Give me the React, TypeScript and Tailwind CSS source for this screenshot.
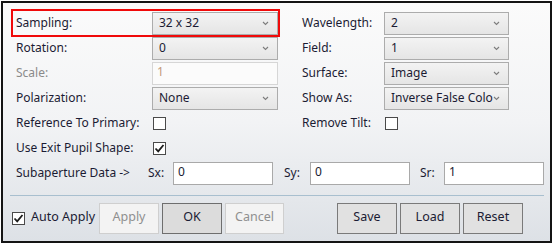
import React from 'react'

const font = { fontFamily: '"Noto Sans", "Liberation Sans", sans-serif' }

function Chevron() {
  return (
    <svg width="7" height="5" viewBox="0 0 7 5" className="shrink-0">
      <polyline points="1,1 3.5,3.5 6,1" fill="none" stroke="#7d7d7d" strokeWidth="1.1" />
    </svg>
  )
}

function Select({ value, width }: { value: string; width: string }) {
  return (
    <div
      className={`${width} h-[23px] flex items-center justify-between pl-[6px] pr-[8px] border border-[#acacac] bg-gradient-to-b from-[#f3f3f3] to-[#e5e5e5] text-[#1b1b33]`}
    >
      <span className="whitespace-nowrap overflow-hidden leading-[18px] -mt-[2px] pr-[2px]">{value}</span>
      <Chevron />
    </div>
  )
}

function Input({ value, width, disabled }: { value: string; width: string; disabled?: boolean }) {
  return (
    <div
      className={`${width} h-[23px] pl-[4px] leading-[17px] border ${
        disabled ? 'border-[#d6d6d6] bg-[#fbfbfb] text-[#c49a7c]' : 'border-[#a9a9a9] bg-white text-[#1b1b33]'
      }`}
    >
      {value}
    </div>
  )
}

function Check({ checked }: { checked?: boolean }) {
  return (
    <div className="w-[13px] h-[13px] border border-[#4a4a4a] bg-white flex items-center justify-center shrink-0">
      {checked && (
        <svg width="11" height="11" viewBox="0 0 11 11">
          <polyline points="1.5,5.5 4.2,8.3 9.5,2" fill="none" stroke="#1c1c1c" strokeWidth="1.8" />
        </svg>
      )}
    </div>
  )
}

function Button({ label, kind }: { label: string; kind: 'disabled' | 'default' | 'normal' }) {
  const cls =
    kind === 'disabled'
      ? 'border-[#cfcfcf] bg-[#f3f3f3] text-[#8f8f8f]'
      : kind === 'default'
      ? 'border-[#6e6e6e] bg-[#dcdcdc] text-[#1b1b33]'
      : 'border-[#7a7a7a] bg-[#e1e1e1] text-[#1b1b33]'
  return (
    <div
      className={`h-[31px] flex items-center justify-center border ${cls} pb-[2px] text-[12.5px]`}
      style={{ width: label === 'Cancel' ? 59 : 60 }}
    >
      {label}
    </div>
  )
}

function Row({ children }: { children: React.ReactNode }) {
  return <div className="relative flex items-center h-[23px]">{children}</div>
}

export default function App() {
  return (
    <div className="w-[553px] h-[244px] bg-white p-[1px] text-[12px]" style={font}>
      <div className="h-[242px] border-2 border-[#141414] bg-gradient-to-b from-[#fbfbfb] via-[#f2f3f5] to-[#dde1e6] flex flex-col">
        <div className="pt-[9px] pl-[13px] flex flex-col gap-[2px] text-[#1b1b33]">
          <Row>
            <div className="absolute -left-[5px] -top-[3px] w-[269px] h-[28px] border-2 border-[#f00a0a]" />
            <span className="w-[136px] -mt-[2px]">Sampling:</span>
            <Select value="32 x 32" width="w-[126px]" />
            <span className="ml-[24px] w-[82px] -mt-[2px]">Wavelength:</span>
            <Select value="2" width="w-[125px]" />
          </Row>
          <Row>
            <span className="w-[136px] -mt-[2px]">Rotation:</span>
            <Select value="0" width="w-[126px]" />
            <span className="ml-[24px] w-[82px] -mt-[2px]">Field:</span>
            <Select value="1" width="w-[125px]" />
          </Row>
          <Row>
            <span className="w-[136px] -mt-[2px] text-[#8a8a8a]">Scale:</span>
            <Input value="1" width="w-[126px]" disabled />
            <span className="ml-[24px] w-[82px] -mt-[2px]">Surface:</span>
            <Select value="Image" width="w-[125px]" />
          </Row>
          <Row>
            <span className="w-[136px] -mt-[2px]">Polarization:</span>
            <Select value="None" width="w-[126px]" />
            <span className="ml-[24px] w-[82px] -mt-[2px]">Show As:</span>
            <Select value="Inverse False Colo" width="w-[125px]" />
          </Row>
          <Row>
            <span className="w-[137px] -mt-[2px]">Reference To Primary:</span>
            <Check />
            <span className="ml-[136px] w-[83px] -mt-[2px]">Remove Tilt:</span>
            <Check />
          </Row>
          <Row>
            <span className="w-[137px] -mt-[2px]">Use Exit Pupil Shape:</span>
            <Check checked />
          </Row>
          <Row>
            <span className="w-[132px] -mt-[2px]">Subaperture Data -&gt;</span>
            <span className="w-[25px] -mt-[2px]">Sx:</span>
            <Input value="0" width="w-[100px]" />
            <span className="ml-[11px] w-[26px] -mt-[2px]">Sy:</span>
            <Input value="0" width="w-[100px]" />
            <span className="ml-[10px] w-[24px] -mt-[2px]">Sr:</span>
            <Input value="1" width="w-[100px]" />
          </Row>
        </div>
        <div className="mt-[10px] ml-[7px] w-[534px] h-px bg-[#a8bfcf]" />
        <div className="mt-[7px] flex items-center text-[#1b1b33] text-[12.5px]">
          <div className="ml-[9px] flex items-center gap-[6px] w-[87px]">
            <Check checked />
            <span className="-mt-[3px]">Auto Apply</span>
          </div>
          <div className="flex gap-[3px]">
            <Button label="Apply" kind="disabled" />
            <Button label="OK" kind="default" />
            <Button label="Cancel" kind="disabled" />
          </div>
          <div className="ml-[53px] flex gap-[3px]">
            <Button label="Save" kind="normal" />
            <Button label="Load" kind="normal" />
            <Button label="Reset" kind="normal" />
          </div>
        </div>
      </div>
    </div>
  )
}
